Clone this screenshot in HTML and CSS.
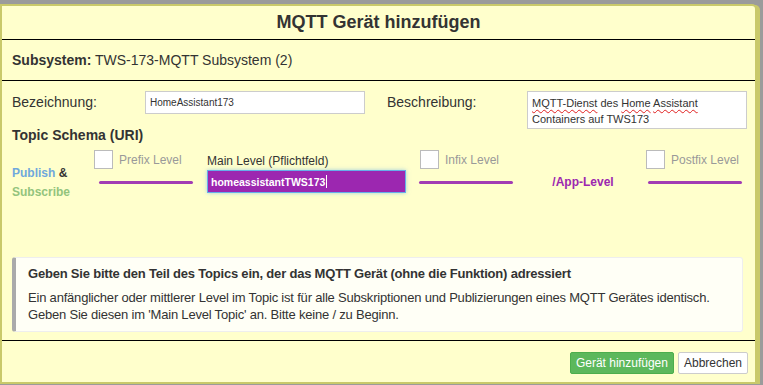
FILE: index.html
```html
<!DOCTYPE html>
<html lang="de">
<head>
    <meta charset="UTF-8">
    <meta name="viewport" content="width=device-width, initial-scale=1.0">
    <title>MQTT Gerät hinzufügen</title>
    <link rel="stylesheet" href="styles.css">
</head>
<body>
    <div class="dialog">
        <div class="dialog-title">MQTT Gerät hinzufügen</div>
        <div class="subsystem"><b>Subsystem:</b> TWS-173-MQTT Subsystem (2)</div>

        <div class="dialog-body">
            <div class="top-row">
                <div class="left-col">
                    <div class="field">
                        <label class="field-label label-bez" for="bezeichnung">Bezeichnung:</label>
                        <input type="text" id="bezeichnung" class="text-input" value="HomeAssistant173">
                    </div>
                    <div class="schema-title">Topic Schema (URI)</div>
                </div>
                <div class="field right-col">
                    <label class="field-label label-besch">Beschreibung:</label>
                    <!-- Textarea nachgebaut, damit die Rechtschreibmarkierung sichtbar bleibt -->
                    <div class="text-area" contenteditable="true"><span class="misspelled">MQTT-Dienst</span> des <span class="misspelled">Home</span> <span class="misspelled">Assistant</span><br>Containers auf TWS173</div>
                </div>
            </div>

            <div class="topic-row">
                <div class="pubsub">
                    <span class="pub">Publish</span> &amp;<br>
                    <span class="sub">Subscribe</span>
                </div>

                <div class="level level-prefix">
                    <div class="level-check">
                        <input type="checkbox" class="check">
                        <span>Prefix Level</span>
                    </div>
                    <div class="level-line"></div>
                </div>

                <div class="main-level">
                    <label for="mainLevel">Main Level (Pflichtfeld)</label>
                    <div class="main-input">homeassistantTWS173<span class="caret"></span></div>
                </div>

                <div class="level level-infix">
                    <div class="level-check">
                        <input type="checkbox" class="check">
                        <span>Infix Level</span>
                    </div>
                    <div class="level-line"></div>
                </div>

                <div class="app-level">/App-Level</div>

                <div class="level level-postfix">
                    <div class="level-check">
                        <input type="checkbox" class="check">
                        <span>Postfix Level</span>
                    </div>
                    <div class="level-line"></div>
                </div>
            </div>

            <div class="hint">
                <div class="hint-title">Geben Sie bitte den Teil des Topics ein, der das MQTT Gerät (ohne die Funktion) adressiert</div>
                <p>Ein anfänglicher oder mittlerer Level im Topic ist für alle Subskriptionen und Publizierungen eines MQTT Gerätes identisch.<br>
                Geben Sie diesen im 'Main Level Topic' an. Bitte keine / zu Beginn.</p>
            </div>
        </div>

        <div class="dialog-footer">
            <button type="button" class="btn btn-success">Gerät hinzufügen</button>
            <button type="button" class="btn btn-default">Abbrechen</button>
        </div>
    </div>
</body>
</html>
```

FILE: styles.css
```css
body {
    margin: 0;
    padding-top: 4px;
    background-color: #9b9b9b;
    font-family: "Liberation Sans", Arial, sans-serif;
    color: #333;
}

.dialog {
    width: 753px;
    background-color: #ffffcc;
    border: 2px solid #c9c96a;
    border-radius: 0 5px 0 0;
    box-shadow: 3px 1px 0 #c9c96a;
}

.dialog-title {
    height: 33px;
    line-height: 33px;
    text-align: center;
    font-size: 18px;
    font-weight: bold;
    border-bottom: 1px solid #000;
}

.subsystem {
    height: 40px;
    line-height: 40px;
    padding-left: 10px;
    font-size: 14px;
    border-bottom: 1px solid #000;
}

.dialog-body {
    padding: 10px 0 8px 10px;
}

.top-row {
    display: flex;
    align-items: flex-start;
}

.field {
    display: flex;
    align-items: flex-start;
}

.field-label {
    font-size: 14px;
    line-height: 23px;
}

.label-bez {
    width: 133px;
}

.label-besch {
    width: 140px;
}

.right-col {
    margin-left: 22px;
}

.text-input {
    box-sizing: border-box;
    width: 220px;
    height: 23px;
    margin: 0;
    padding: 0 4px;
    border: 1px solid #ccc;
    background: #fff;
    font-family: inherit;
    font-size: 10px;
    color: #333;
}

.text-area {
    box-sizing: border-box;
    width: 220px;
    height: 38px;
    padding: 3px 4px;
    border: 1px solid #ccc;
    background: #fff;
    font-size: 11px;
    line-height: 16px;
    color: #333;
    overflow: hidden;
    outline: none;
}

.misspelled {
    text-decoration: underline wavy #e02020;
    text-decoration-thickness: 1px;
    text-underline-offset: 2px;
}

.schema-title {
    margin-top: 12px;
    font-size: 14px;
    font-weight: bold;
    line-height: 18px;
}

.topic-row {
    display: flex;
    align-items: flex-start;
    margin-top: 6px;
    height: 107px;
}

.pubsub {
    width: 82px;
    margin-top: 14px;
    font-size: 12px;
    font-weight: bold;
    line-height: 19px;
}

.pub {
    color: #6fa8dc;
}

.sub {
    color: #93c47d;
}

.level {
    width: 99px;
}

.level-check {
    display: flex;
    align-items: center;
    height: 19px;
    font-size: 12px;
    color: #999;
}

.check {
    appearance: none;
    -webkit-appearance: none;
    box-sizing: border-box;
    width: 19px;
    height: 19px;
    margin: 0 6px 0 0;
    border: 1px solid #bbb;
    background: #fff;
}

.level-line {
    width: 94px;
    height: 3px;
    margin-top: 12px;
    border-radius: 2px;
    background-color: #a23cb4;
}

.level-prefix .level-line {
    margin-left: 5px;
}

.level-infix {
    width: 95px;
    margin-left: 13px;
}

.level-infix .level-check {
    margin-left: 1px;
}

.level-postfix .level-line {
    margin-left: 2px;
}

.main-level {
    display: flex;
    flex-direction: column;
    margin-left: 14px;
    padding-top: 3px;
    font-size: 12px;
    line-height: 16px;
}

.main-input {
    display: flex;
    align-items: center;
    box-sizing: border-box;
    width: 199px;
    height: 23px;
    margin-top: 1px;
    padding: 0 3px;
    border: 1px solid #66afe9;
    box-shadow: 0 0 4px rgba(102, 175, 233, 0.6);
    background-color: #9c27b0;
    color: #fff;
    font-size: 10.5px;
    font-weight: bold;
}

.caret {
    width: 1px;
    height: 13px;
    margin-left: 1px;
    background-color: #fff;
}

.app-level {
    width: 126px;
    margin-top: 24px;
    padding-left: 6px;
    text-align: center;
    font-size: 12px;
    font-weight: bold;
    line-height: 16px;
    color: #9c27b0;
}

.hint {
    width: 714px;
    padding: 7px 0 8px 12px;
    border: 1px solid #eee;
    border-left: 4px solid #aaa;
    border-radius: 3px;
    background-color: #fffff6;
    letter-spacing: -0.2px;
}

.hint-title {
    font-size: 13px;
    font-weight: bold;
    line-height: 18px;
}

.hint p {
    margin: 6px 0 0;
    font-size: 13px;
    line-height: 17px;
}

.dialog-footer {
    display: flex;
    justify-content: flex-end;
    gap: 4px;
    height: 42px;
    box-sizing: border-box;
    padding: 11px 7px 0 0;
    border-top: 1px solid #000;
}

.btn {
    height: 22px;
    padding: 0 5px;
    font-family: inherit;
    font-size: 12px;
    border-radius: 2px;
    cursor: pointer;
}

.btn-success {
    color: #fff;
    background-color: #5cb85c;
    border: 1px solid #4cae4c;
}

.btn-default {
    color: #333;
    background-color: #fff;
    border: 1px solid #ccc;
}
```
